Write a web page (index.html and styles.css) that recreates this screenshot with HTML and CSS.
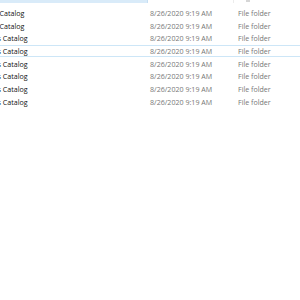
FILE: index.html
```html
<!DOCTYPE html>
<html lang="en">
<head>
    <meta charset="UTF-8">
    <title>Folder list</title>
    <link rel="stylesheet" href="styles.css">
</head>
<body>
    <div class="explorer">
        <div class="header">
            <div class="col-name hot"></div>
            <div class="col-date"></div>
            <div class="col-type"><span class="sort-mark"></span></div>
        </div>
        <div class="list">
            <div class="row"><div class="col-name"><span class="clip first">Catalog</span></div><div class="col-date">8/26/2020 9:19 AM</div><div class="col-type">File folder</div></div>
            <div class="row"><div class="col-name"><span class="clip first">Catalog</span></div><div class="col-date">8/26/2020 9:19 AM</div><div class="col-type">File folder</div></div>
            <div class="row"><div class="col-name"><span class="pre">Parts</span> Catalog</div><div class="col-date">8/26/2020 9:19 AM</div><div class="col-type">File folder</div></div>
            <div class="row focus"><div class="col-name"><span class="pre">Parts</span> Catalog</div><div class="col-date">8/26/2020 9:19 AM</div><div class="col-type">File folder</div></div>
            <div class="row"><div class="col-name"><span class="pre">Parts</span> Catalog</div><div class="col-date">8/26/2020 9:19 AM</div><div class="col-type">File folder</div></div>
            <div class="row"><div class="col-name"><span class="pre">Parts</span> Catalog</div><div class="col-date">8/26/2020 9:19 AM</div><div class="col-type">File folder</div></div>
            <div class="row"><div class="col-name"><span class="pre">Parts</span> Catalog</div><div class="col-date">8/26/2020 9:19 AM</div><div class="col-type">File folder</div></div>
            <div class="row"><div class="col-name"><span class="pre">Parts</span> Catalog</div><div class="col-date">8/26/2020 9:19 AM</div><div class="col-type">File folder</div></div>
        </div>
    </div>
</body>
</html>
```

FILE: styles.css
```css
body {
    margin: 0;
    background: #fff;
    font-family: 'Open Sans', sans-serif;
    font-size: 7.1px;
    color: #111;
}

.explorer {
    width: 300px;
    height: 300px;
    overflow: hidden;
}

.header {
    display: flex;
    height: 3px;
}

.header .col-name.hot {
    background: #d9ebf9;
    width: 147px;
    border-right: 1px solid #c7dff3;
}

.header .col-date {
    width: 85px;
    border-right: 1px solid #ececec;
}

.sort-mark {
    display: block;
    width: 4px;
    height: 2px;
    margin-left: 12px;
    background: #d6d6d6;
}

.list {
    padding-top: 3.6px;
}

.row {
    display: flex;
    align-items: center;
    height: 12.7px;
    box-sizing: border-box;
    white-space: nowrap;
}

.row.focus {
    border-top: 1px solid #cde6f7;
    border-bottom: 1px solid #cde6f7;
}

.col-name {
    width: 150px;
}

.col-date {
    width: 88px;
    color: #777;
}

.col-type {
    color: #777;
}

.pre {
    display: inline-block;
    width: 20px;
    margin-left: -19px;
    text-align: right;
}

.clip.first {
    margin-left: -0.5px;
}
```
